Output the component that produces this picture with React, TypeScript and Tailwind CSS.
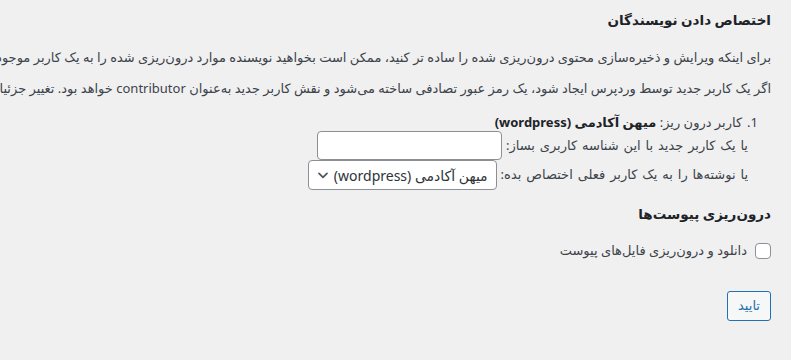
const font = { fontFamily: '"Noto Sans", "DejaVu Sans", sans-serif' };

const ChevronDown = () => (
  <svg width="16" height="16" viewBox="0 0 20 20" fill="none" stroke="#50575e" strokeWidth="2.2" strokeLinecap="round" strokeLinejoin="round">
    <path d="M5 8l5 5 5-5" />
  </svg>
);

export default function App() {
  return (
    <div dir="rtl" className="w-full h-[360px] overflow-hidden bg-[#f0f0f1] text-[13px] text-[#3c434a]" style={font}>
      <div className="pr-5 pt-[10px]">
        <h3 className="text-[13.5px] leading-5 font-bold text-[#1d2327] whitespace-nowrap">اختصاص دادن نویسندگان</h3>

        <p className="mt-[18px] leading-[18px] whitespace-nowrap">
          برای اینکه ویرایش و ذخیره‌سازی محتوی درون‌ریزی شده را ساده تر کنید، ممکن است بخواهید نویسنده موارد درون‌ریزی شده را به یک کاربر موجود در این سایت اختصاص دهید. برای مثال، ممکن است بخواهید همه مطالب را به حساب مدیر اختصاص دهید.
        </p>
        <p className="mt-[13px] leading-[18px] whitespace-nowrap">
          اگر یک کاربر جدید توسط وردپرس ایجاد شود، یک رمز عبور تصادفی ساخته می‌شود و نقش کاربر جدید به‌عنوان contributor خواهد بود. تغییر جزئیات کاربر جدید در صورت لزوم ضروری خواهد بود.
        </p>

        <div className="mt-[16px] mr-[13px]">
          <div className="flex items-center gap-[5px] leading-[18px] whitespace-nowrap">
            <bdo dir="rtl">1.</bdo>
            <span>
              کاربر درون ریز: <strong className="font-bold text-[#1d2327]">میهن آکادمی (wordpress)</strong>
            </span>
          </div>
          <div className="flex items-center gap-1 mr-[10px] whitespace-nowrap">
            <span className="[word-spacing:1.5px]">یا یک کاربر جدید با این شناسه کاربری بساز:</span>
            <input type="text" className="w-[185px] h-[29px] bg-white border border-[#8c8f94] rounded-[4px]" />
          </div>
          <div className="flex items-center gap-1 mr-[10px] whitespace-nowrap">
            <span className="[word-spacing:1.5px]">یا نوشته‌ها را به یک کاربر فعلی اختصاص بده:</span>
            <div className="w-[189px] h-[30px] bg-white border border-[#8c8f94] rounded-[4px] flex items-center justify-between pr-2 pl-[6px] text-[14px] text-[#2c3338]">
              <span>میهن آکادمی (wordpress)</span>
              <ChevronDown />
            </div>
          </div>
        </div>

        <h3 className="mt-[14px] text-[13.5px] leading-5 font-bold text-[#1d2327] whitespace-nowrap">درون‌ریزی پیوست‌ها</h3>

        <div className="mt-[17px] flex items-center gap-2 whitespace-nowrap">
          <span className="w-4 h-4 bg-white border border-[#8c8f94] rounded-[4px] shrink-0" />
          <span>دانلود و درون‌ریزی فایل‌های پیوست</span>
        </div>

        <div className="mt-[30px] flex">
          <button className="h-[30px] px-[10px] bg-[#f6f7f7] border border-[#2271b1] rounded-[3px] text-[#2271b1] text-[13px]">تایید</button>
        </div>
      </div>
    </div>
  );
}
